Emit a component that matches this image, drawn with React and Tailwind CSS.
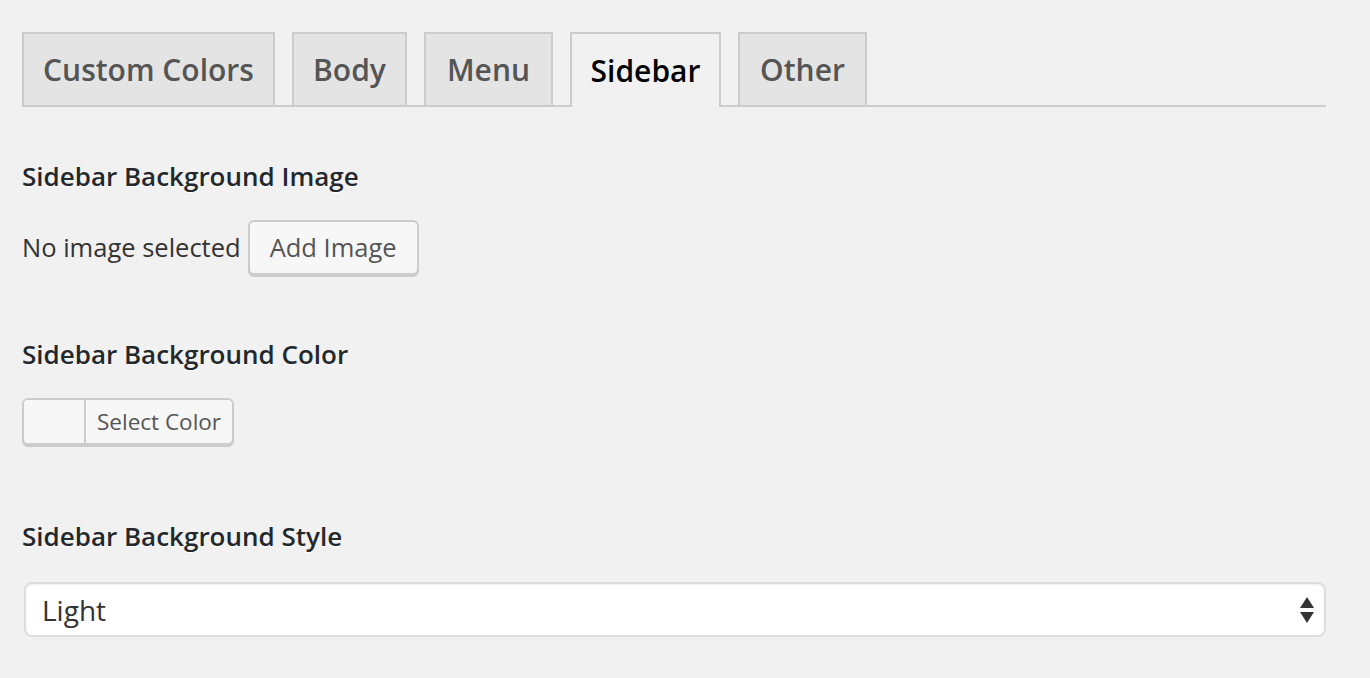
import React from 'react';

const TABS = [
  { label: 'Custom Colors', w: 'w-[253px]' },
  { label: 'Body', w: 'w-[115px]' },
  { label: 'Menu', w: 'w-[129px]' },
  { label: 'Sidebar', w: 'w-[151px]' },
  { label: 'Other', w: 'w-[129px]' },
];

function Heading({ children }) {
  return (
    <h3 className="text-[26px] leading-[34px] font-semibold text-[#23282d] [text-shadow:0_1px_0_#fff]">
      {children}
    </h3>
  );
}

export default function App() {
  const active = 'Sidebar';
  return (
    <div
      className="min-h-[678px] w-full bg-[#f1f1f1] pl-[22px] pr-[44px] pt-[32px]"
      style={{ fontFamily: '"Open Sans", "Liberation Sans", sans-serif' }}
    >
      <div className="flex gap-[17px] border-b-2 border-[#ccc] h-[75px]">
        {TABS.map((t) => (
          <div
            key={t.label}
            className={
              t.label === active
                ? `${t.w} shrink-0 h-[75px] border-2 border-b-0 border-[#ccc] bg-[#f1f1f1] text-center text-[30px] font-semibold text-black leading-[73px] whitespace-nowrap`
                : `${t.w} shrink-0 h-[75px] border-2 border-[#ccc] bg-[#e4e4e4] text-center text-[30px] font-semibold text-[#555] leading-[72px] whitespace-nowrap`
            }
          >
            {t.label}
          </div>
        ))}
      </div>

      <div className="pt-[52px]">
        <Heading>Sidebar Background Image</Heading>
        <div className="mt-[27px] flex items-center gap-[7px]">
          <span className="text-[25.5px] text-[#333]">No image selected</span>
          <button className="h-[55px] px-[20px] rounded-[6px] border-2 border-[#ccc] bg-[#f7f7f7] text-[25.5px] text-[#555] shadow-[0_2px_0_#ccc]">
            Add Image
          </button>
        </div>

        <div className="mt-[62px]">
          <Heading>Sidebar Background Color</Heading>
        </div>
        <div className="mt-[27px] flex">
          <div className="flex h-[47px] rounded-[6px] border-2 border-[#ccc] bg-[#f7f7f7] shadow-[0_2px_0_#ccc] overflow-hidden">
            <div className="w-[62px] border-r-2 border-[#ccc] bg-[#f7f7f7]" />
            <div className="px-[11px] text-[22.5px] leading-[43px] text-[#555]">Select Color</div>
          </div>
        </div>

        <div className="mt-[74px]">
          <Heading>Sidebar Background Style</Heading>
        </div>
        <div className="mt-[29px] ml-[2px] flex items-center h-[55px] rounded-[8px] border-2 border-[#ddd] bg-white shadow-[inset_0_1px_2px_rgba(0,0,0,0.07)] pl-[16px] pr-[10px]">
          <span className="flex-1 text-[28px] text-[#333]">Light</span>
          <svg width="14" height="26" viewBox="0 0 14 26" className="fill-[#333]">
            <polygon points="7,0 14,11 0,11" />
            <polygon points="0,15 14,15 7,26" />
          </svg>
        </div>
      </div>
    </div>
  );
}
